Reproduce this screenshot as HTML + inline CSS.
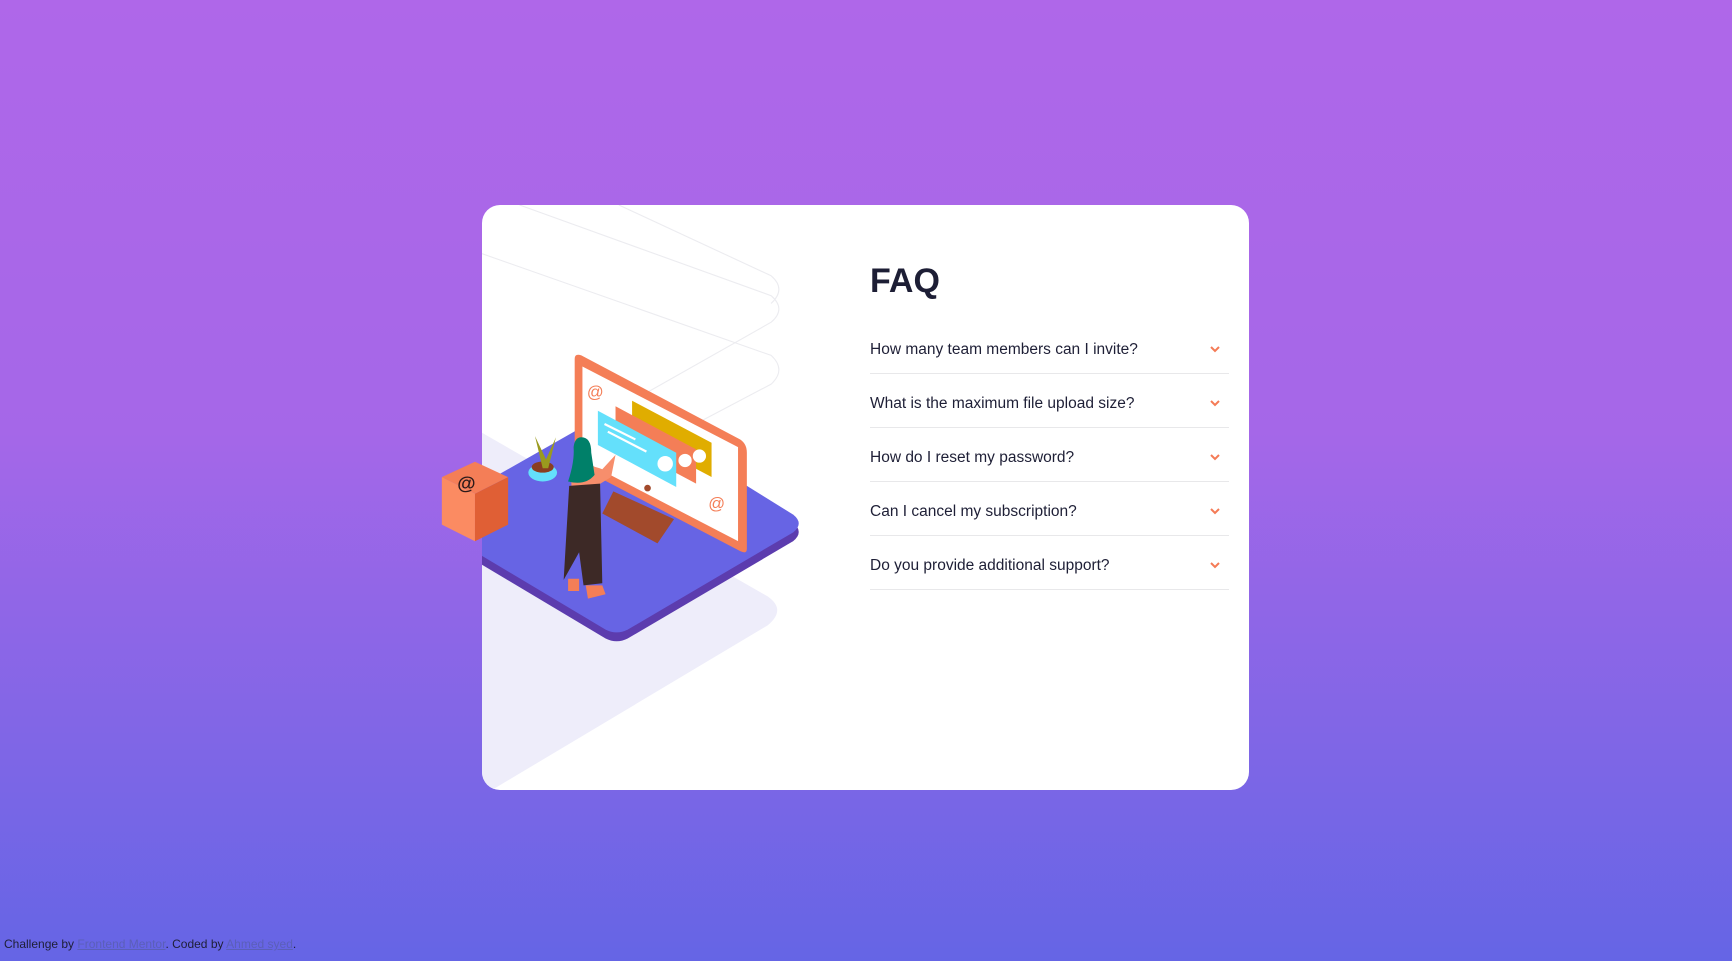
<!DOCTYPE html>
<html><head><meta charset="utf-8"><style>
html,body{margin:0;padding:0}
body{width:1732px;height:961px;overflow:hidden;position:relative;font-family:"Liberation Sans",sans-serif;background:linear-gradient(180deg,#af67e9 0%,#a567e8 45%,#6565e5 100%)}
.card{position:absolute;left:482px;top:205px;width:767px;height:585px;background:#fff;border-radius:18px;overflow:hidden}
svg.ill{position:absolute;left:0;top:0}
h1{position:absolute;left:870px;top:262px;margin:0;font-size:34px;font-weight:bold;color:#1d1e35;letter-spacing:0}
.item{position:absolute;left:870px;width:359px;height:54px;border-bottom:1px solid #e8e8ea;box-sizing:border-box}
.item span{position:absolute;left:0;top:21px;font-size:15.5px;color:#1e1f36}
.item svg{position:absolute;right:9px;top:26px}
.foot{position:absolute;left:4px;top:937px;font-size:12px;color:#1e1f36}
.foot a{color:#5b5fb8;text-decoration:underline}
</style></head><body>
<div class="card">
<svg width="767" height="585" viewBox="436 186 695 529" preserveAspectRatio="none" style="position:absolute;left:0;top:0">
<path d="M436 392 L695 540 Q712 552 695 566 L445 715 L436 715 Z" fill="#eeedfa"/>
<path d="M470 186 L698 268 Q712 280 698 292 L436 440" fill="none" stroke="#ececf0" stroke-width="1"/>
<path d="M560 186 L698 250 Q712 262 698 275" fill="none" stroke="#ececf0" stroke-width="1"/>
<path d="M436 230 L698 322 Q712 335 698 348 L580 410" fill="none" stroke="#ececf0" stroke-width="1"/>
<path d="M560 372 L718 473 Q728 482 718 490 L568 578 Q558 583 548 578 L380 478 Z" fill="#5c3cae"/>
<path d="M560 368 L718 466 Q728 474 718 482 L568 570 Q558 575 548 570 L380 470 Z" fill="#6764e4"/>
<path d="M555 445 L610 470 L595 492 L545 465 Z" fill="#a24a2c"/>
<path d="M520 325 Q520 320 526 322 L670 398 Q676 402 676 410 L676 497 Q676 502 670 499 L526 424 Q520 420 520 414 Z" fill="#f47e57"/>
<path d="M527 332 L668 405 L668 490 L527 417 Z" fill="#fff"/>
<path d="M572 363 L644 401 L644 432 L572 394 Z" fill="#e0ad00"/>
<path d="M557 368 L630 407 L630 438 L557 399 Z" fill="#f47e57"/>
<path d="M541 372 L612 410 L612 441 L541 403 Z" fill="#64e0fb"/>
<circle cx="602" cy="420" r="7" fill="#fff"/><circle cx="620" cy="417" r="6" fill="#fff"/><circle cx="633" cy="413" r="6" fill="#fff"/>
<path d="M547 384 L575 398 M550 391 L585 409" stroke="#fff" stroke-width="2"/>
<text x="531" y="360" font-size="15" fill="#f47e57" font-family="Liberation Sans">@</text>
<text x="641" y="461" font-size="15" fill="#f47e57" font-family="Liberation Sans">@</text>
<circle cx="586" cy="442" r="3" fill="#a24a2c"/>
<ellipse cx="491" cy="428" rx="13" ry="8" fill="#64e0fb"/><ellipse cx="491" cy="423" rx="10" ry="5" fill="#8a3e20"/>
<path d="M491 424 L484 395 L494 416 L503 396 L496 424 Z" fill="#9a9a1e"/>
<path d="M517 430 Q530 418 545 425 L557 412 L553 432 L540 440 L517 440 Z" fill="#f78e6c"/>
<path d="M526 396 Q535 396 535 410 L538 430 Q530 440 514 436 Q520 418 519 405 Q520 396 526 396 Z" fill="#008069"/>
<path d="M515 440 L543 438 L545 528 L528 530 L524 500 L510 525 Z" fill="#3d2926"/>
<path d="M514 524 L524 524 L524 535 L514 535 Z M530 530 L545 530 L548 538 L532 542 Z" fill="#f47e57"/>
</svg>
</div>
<svg class="ill" width="1732" height="961" viewBox="0 0 1568 870" preserveAspectRatio="none">
<path d="M400 432 L430 418 L460 432 L430 447 Z" fill="#f47e57"/>
<path d="M400 432 L430 447 L430 490 L400 475 Z" fill="#fb8b62"/>
<path d="M430 447 L460 432 L460 475 L430 490 Z" fill="#e05f35"/>
<text x="414" y="443" font-size="17" font-weight="bold" fill="#2a1a1a" font-family="Liberation Sans">@</text>
</svg>
<h1>FAQ</h1>
<div class="item" style="top:320px"><span>How many team members can I invite?</span><svg width="10" height="7" viewBox="0 0 10 7"><path d="M1 1l4 4 4-4" stroke="#f47b56" stroke-width="2" fill="none"/></svg></div>
<div class="item" style="top:374px"><span>What is the maximum file upload size?</span><svg width="10" height="7" viewBox="0 0 10 7"><path d="M1 1l4 4 4-4" stroke="#f47b56" stroke-width="2" fill="none"/></svg></div>
<div class="item" style="top:428px"><span>How do I reset my password?</span><svg width="10" height="7" viewBox="0 0 10 7"><path d="M1 1l4 4 4-4" stroke="#f47b56" stroke-width="2" fill="none"/></svg></div>
<div class="item" style="top:482px"><span>Can I cancel my subscription?</span><svg width="10" height="7" viewBox="0 0 10 7"><path d="M1 1l4 4 4-4" stroke="#f47b56" stroke-width="2" fill="none"/></svg></div>
<div class="item" style="top:536px"><span>Do you provide additional support?</span><svg width="10" height="7" viewBox="0 0 10 7"><path d="M1 1l4 4 4-4" stroke="#f47b56" stroke-width="2" fill="none"/></svg></div>
<div class="foot">Challenge by <a>Frontend Mentor</a>. Coded by <a>Ahmed syed</a>.</div>
</body></html>
